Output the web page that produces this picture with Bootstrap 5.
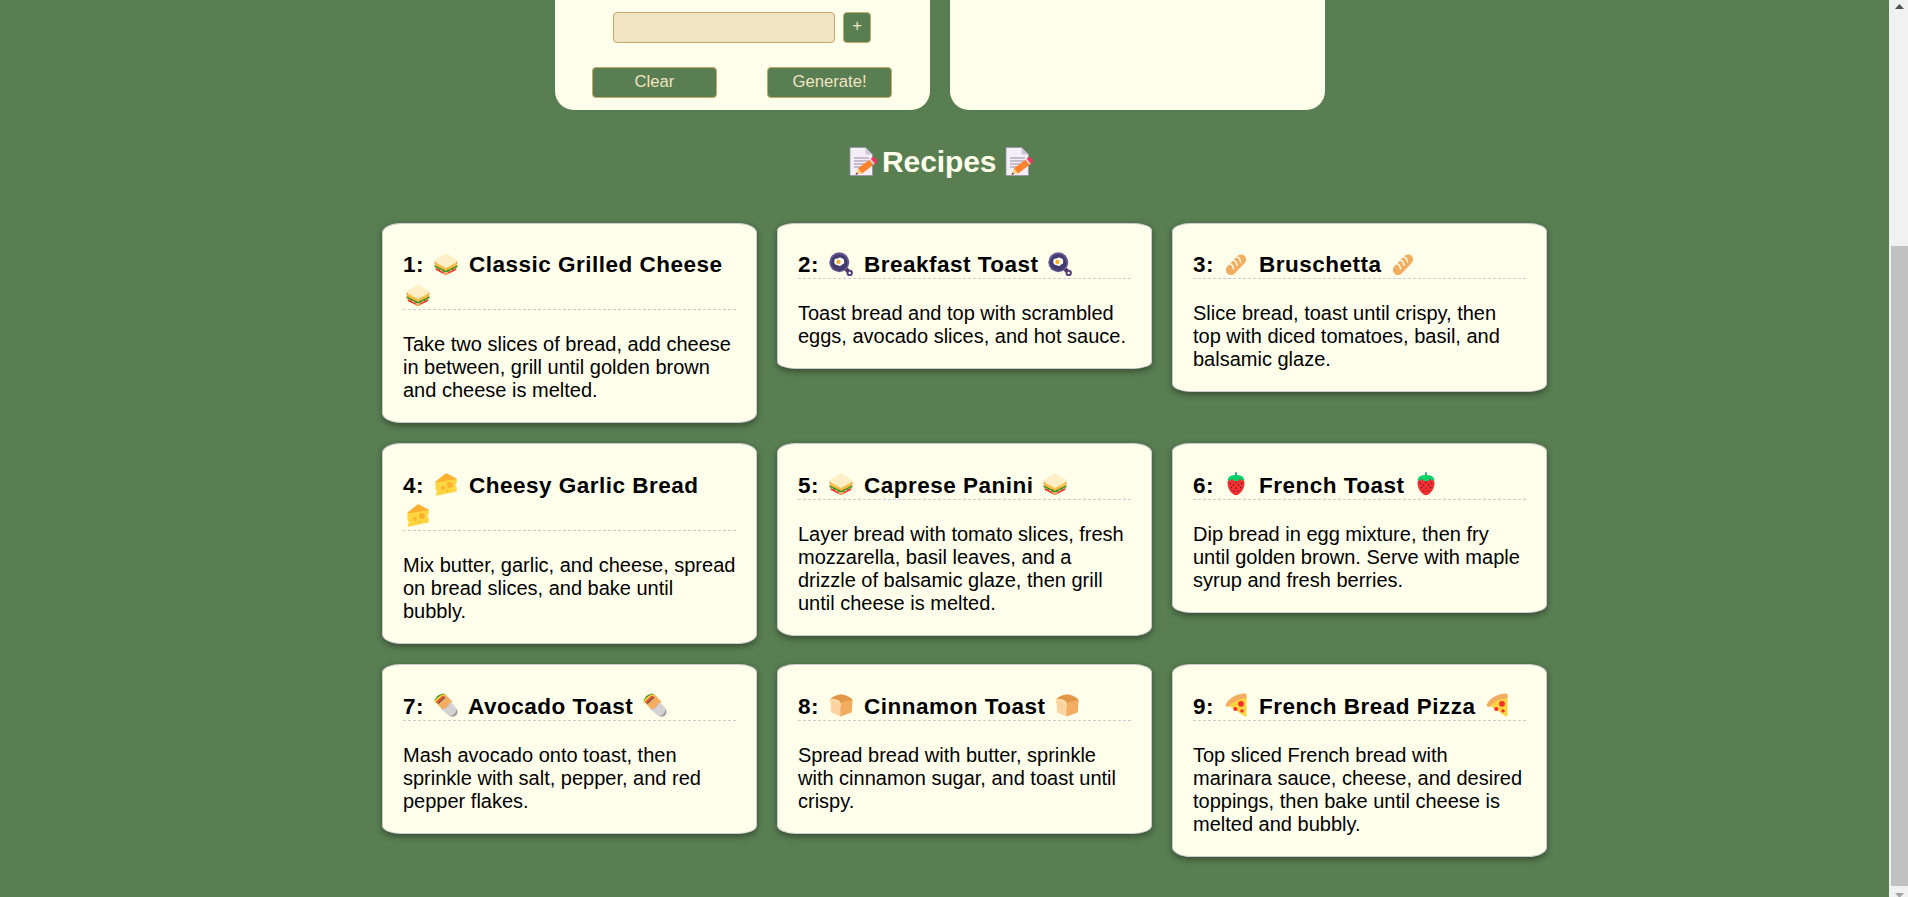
<!DOCTYPE html>
<html lang="en">
<head>
<meta charset="utf-8">
<meta name="viewport" content="width=device-width, initial-scale=1">
<title>Recipes</title>
<link href="https://cdn.jsdelivr.net/npm/bootstrap@5.3.0/dist/css/bootstrap.min.css" rel="stylesheet">
<style>
  :root { --green:#597e52; --gold:#c6a969; --cream:#ffffec; --sand:#f1e4c3; }
  html, body { height:100%; overflow:hidden; }
  body { background:var(--green); color:#000; font:20px/23px "Liberation Sans", Arial, sans-serif; }
  .panels { gap:20px; margin-left:555px; height:110px; }
  .panel { width:375px; background:var(--cream); border-radius:0 0 19px 19px; }
  .form-rows { padding:12px 37px 12px; }
  .form-rows .form-control { width:222px; height:31px; background:var(--sand); border:1px solid var(--gold); border-radius:4px; }
  .tool-btn { height:31px; padding:0 0 2px; font-size:16.67px; line-height:27px; color:var(--sand); background:var(--green); border:1px solid var(--gold); border-radius:4px; }
  .tool-btn.plus { width:28px; padding-bottom:4px; line-height:24px; }
  .tool-btn.wide { width:125px; }
  .entry-row { gap:8px; padding-left:21px; }
  .action-row { margin-top:24px; gap:50px; }
  .title { margin:34px 0 0 847px; font-size:30px; font-weight:700; line-height:36px; color:var(--cream); height:78.6px; }
  .title svg { width:31px; height:31px; margin-top:1.5px; }
  .title span { margin:0 7px 0 4px; letter-spacing:-.1px; }
  .recipes { display:grid; grid-template-columns:repeat(3,375px); gap:20px; margin-left:382px; align-items:start; }
  .recipe { background:var(--cream); border:1px solid #ccc; border-radius:5%; padding:23.5px 20px 20.25px; box-shadow:0 2.5px 6px rgba(0,0,0,.36); }
  .recipe h3 { font-size:22.5px; font-weight:700; line-height:27px; letter-spacing:.5px; margin:0 0 23px; border-bottom:1px dashed #ccc; }
  .recipe h3 svg { width:24px; height:24px; margin:4.5px 4.2px 0 3.2px; vertical-align:-3.5px; }
  .recipe p { margin:0; }
  .scroll { width:19px; height:897px; background:#f1f1f1; }
  .thumb { width:17px; height:640px; margin-top:236px; background:#c1c1c1; }
</style>
</head>
<body>
<svg width="0" height="0" class="position-absolute">
  <symbol id="note" viewBox="0 0 31 31">
    <path d="M3 1.500h15.500l7 7v21H3z" fill="#f3eef8" stroke="#998ea5" stroke-width=".8"/>
    <path d="M18.500 1.500v7h7z" fill="#cdc4d6"/>
    <path d="M7 12h15M7 15h14M7 18h11M7 21h8" stroke="#998ea5" stroke-width="1.200"/>
    <path d="M9 28.500l2.200-6.500 4.300 5z" fill="#ffce7c"/><path d="M8.500 29l1-2.500 1.500 1.500z" fill="#402a32"/>
    <path d="M11 22.300 22.500 13.700l4 5-11.300 8.800z" fill="#ff822d"/>
    <path d="M22.500 13.700l1.800-1.300 4 5-1.800 1.300z" fill="#d3d3d3"/>
    <path d="M24.800 12.600c2.500-2 5.800 2.300 3.600 4.500z" fill="#f8315f" stroke="#f8315f" stroke-width="1.500"/>
  </symbol>
  <symbol id="sandwich" viewBox="0 0 24 24">
    <path d="M1 16.200 12 22.500 23 16.200v1L12 23.200 1 17.500z" fill="#f3ad61"/>
    <path d="M2 16 12 21.500 22 16v2L12 23 2 18z" fill="#f92f2f"/>
    <path d="M8.500 20.800h7L12 23.200z" fill="#f3ad61"/>
    <path d="M.5 13 12 18.500 23.500 13v2.300l-3 1-1.500 1.700-2-.2-2 2-3 .7-3-.8-2-1.900-2 .2-1.500-1.700-3-1z" fill="#44911b"/>
    <path d="M1 12 12 17.800 23 12v1.500l-11 5.300L1 13.500z" fill="#ffb02e"/>
    <path d="M.6 8.500 12 15.700 23.400 8.500v3.300L12 18 .6 11.800z" fill="#e19747"/>
    <path d="M2 10.500 12 16.500 22 10.500v1.500L12 17.500 2 12z" fill="#fcd53f"/>
    <path d="M12 1.200 23.500 8.300v1.500L12 16 .5 9.800V8.300z" fill="#ffefc6"/>
  </symbol>
  <symbol id="pan" viewBox="0 0 24 24">
    <path d="M17 17l3 3" stroke="#533566" stroke-width="4"/>
    <circle cx="10.300" cy="10.300" r="10" fill="#635994"/><circle cx="10.300" cy="10.600" r="8.300" fill="#433b6b"/>
    <circle cx="20.700" cy="21" r="2.200" fill="#fff" stroke="#533e78" stroke-width="2"/>
    <path d="M5.300 9c0-2.500 2.200-2.500 3.500-2.500C10 5 12 5 13 6.500c2.500-.2 2 2.500 2.200 3.500.3 2-2 2-3 3.500-1.500 1-3-.2-4-.5-2 .1-3.500-2-2.900-4z" fill="#fff"/>
    <circle cx="9.500" cy="10" r="2.200" fill="#ffb02e"/>
  </symbol>
  <symbol id="baguette" viewBox="0 0 24 24">
    <path d="M7 18 17 7.500" stroke="#f3ad61" stroke-width="10.200" stroke-linecap="round"/>
    <path d="M5.500 11.700c2.500.2 3.500 2 4 5M9 8.300c2.500.2 3.500 2 4 5M12.500 5c2.500.2 3.500 2 4 5" fill="none" stroke="#ffffec" stroke-width="1.500" stroke-linecap="round"/>
  </symbol>
  <symbol id="cheese" viewBox="0 0 24 24">
    <path d="M1.500 9.500 11 2q1-1 2-.5L22.500 6.500v2L2 12z" fill="#ffb02e"/>
    <path d="M1.500 10.500 22.700 7v4.300a2 2 0 0 0 0 3.800v4.500L2 23.800v-2.600a2 2 0 0 0-.5-3.500z" fill="#fcd53f"/>
    <circle cx="15.800" cy="12.900" r="3" fill="#ffb02e"/><circle cx="9" cy="16" r="1.900" fill="#ffb02e"/><circle cx="13.300" cy="18.800" r="1" fill="#ffb02e"/>
  </symbol>
  <symbol id="berry" viewBox="0 0 24 24">
    <path d="M3.500 11c0-8 17-8 17 0 0 6-4.500 12-8.500 12.300C8 23 3.500 17 3.500 11z" fill="#f92f2f"/>
    <path d="M12 .2v6" stroke="#008463" stroke-width="1.500"/>
    <path d="M3.500 8.500C4.500 3.500 8 3 12 3s7.500.5 8.500 5.500q-2.700.5-4.500-1.800Q14 9.500 12 9.200 10 9.500 8 6.700q-1.500 2.300-4.500 1.800z" fill="#00d26a"/>
    <path d="M6.300 10.500v1.300M17.700 10.500v1.300M9.500 12.500v1.300M14.500 12.500v1.300M7.500 15v1.300M12 15.500v1.300M16.500 15v1.300M9.800 18.500v1.300M14.200 18.500v1.300M12 10v1" stroke="#321b41" stroke-width="1.200"/>
  </symbol>
  <symbol id="burrito" viewBox="0 0 24 24">
    <path d="M16.500 10.500 22 15.500q3 3.500 0 7-2.500 2-6 .5L7 15z" fill="#9b9b9b"/>
    <path d="M1 8C-.5 6 3 5.500 3 3c2-.2 1.500-2 4-1.500 2-1.500 3-1.500 4 0L3 9.500z" fill="#44911b"/>
    <path d="M1.200 9C4 7 8 2.500 11.500 1.200L18.500 9l-9.500 8z" fill="#f3ad61"/>
    <path d="M1 9.500Q4.500 3.500 11 2" fill="none" stroke="#fcd53f" stroke-width="2"/>
    <path d="M2.500 9.500 9.500 3" stroke="#f92f2f" stroke-width="1.300"/><path d="M4 10.500 11 4" stroke="#6d4534" stroke-width="1.200"/>
    <path d="M6.500 15.700C9 17 12 15.500 14 13q2-2.800 3-4l5.500 6.500q0 3.500-2.500 6-2.500 2-5 1z" fill="#d3d3d3"/>
  </symbol>
  <symbol id="bread" viewBox="0 0 24 24">
    <path d="M1 7c0-3 9-5.800 11-5.800S24 4 23.500 8l-1 11L11 23.500 9 10z" fill="#e19747"/>
    <path d="M11.500 12q0-3 4-3.500 3-1 7.500-1l-.5 12L11.500 23.500z" fill="#f3ad61"/>
    <path d="M1.500 10.500C-.5 7 1 5 3.500 6c4 0 8 1 8.500 5 .5 1.500-.5 2-.5 3v9.500L2 19.500z" fill="#ffd9a8"/>
    <path d="M4 9.500v10M6.500 10.500v10M9 11.500v10" stroke="#f3ad61" stroke-width=".9" stroke-dasharray=".9 1.500"/>
  </symbol>
  <symbol id="pizza" viewBox="0 0 24 24">
    <path d="M4 12 19.500 3.500h3V22.500q0 1.500-2 .8z" fill="#fcd53f"/>
    <path d="M1.300 13C3.500 5.500 12.500 1 21 .6q1.700 0 1.700 1.700v2.600C15 5.500 7.500 9.500 4.500 14z" fill="#f3ad61"/>
    <circle cx="17" cy="10.800" r="2.900" fill="#f92f2f"/><circle cx="11.300" cy="16" r="2.100" fill="#f92f2f"/><circle cx="18" cy="17.900" r="1.700" fill="#f92f2f"/>
  </symbol>
</svg>
<div class="d-flex">
  <main class="flex-grow-1">
    <div class="panels d-flex">
      <section class="panel form-rows">
        <div class="entry-row d-flex">
          <input class="form-control" type="text" aria-label="Ingredient">
          <button class="btn tool-btn plus" type="button">+</button>
        </div>
        <div class="action-row d-flex">
          <button class="btn tool-btn wide" type="button">Clear</button>
          <button class="btn tool-btn wide" type="button">Generate!</button>
        </div>
      </section>
      <section class="panel"></section>
    </div>
    <h2 class="title d-flex"><svg><use href="#note"/></svg><span>Recipes</span><svg><use href="#note"/></svg></h2>
    <div class="recipes">
      <article class="recipe"><h3>1: <svg><use href="#sandwich"/></svg> Classic Grilled Cheese <svg><use href="#sandwich"/></svg></h3><p>Take two slices of bread, add cheese in between, grill until golden brown and cheese is melted.</p></article>
      <article class="recipe"><h3>2: <svg><use href="#pan"/></svg> Breakfast Toast <svg><use href="#pan"/></svg></h3><p>Toast bread and top with scrambled eggs, avocado slices, and hot sauce.</p></article>
      <article class="recipe"><h3>3: <svg><use href="#baguette"/></svg> Bruschetta <svg><use href="#baguette"/></svg></h3><p>Slice bread, toast until crispy, then top with diced tomatoes, basil, and balsamic glaze.</p></article>
      <article class="recipe"><h3>4: <svg><use href="#cheese"/></svg> Cheesy Garlic Bread <svg><use href="#cheese"/></svg></h3><p>Mix butter, garlic, and cheese, spread on bread slices, and bake until bubbly.</p></article>
      <article class="recipe"><h3>5: <svg><use href="#sandwich"/></svg> Caprese Panini <svg><use href="#sandwich"/></svg></h3><p>Layer bread with tomato slices, fresh mozzarella, basil leaves, and a drizzle of balsamic glaze, then grill until cheese is melted.</p></article>
      <article class="recipe"><h3>6: <svg><use href="#berry"/></svg> French Toast <svg><use href="#berry"/></svg></h3><p>Dip bread in egg mixture, then fry until golden brown. Serve with maple syrup and fresh berries.</p></article>
      <article class="recipe"><h3>7: <svg><use href="#burrito"/></svg> Avocado Toast <svg><use href="#burrito"/></svg></h3><p>Mash avocado onto toast, then sprinkle with salt, pepper, and red pepper flakes.</p></article>
      <article class="recipe"><h3>8: <svg><use href="#bread"/></svg> Cinnamon Toast <svg><use href="#bread"/></svg></h3><p>Spread bread with butter, sprinkle with cinnamon sugar, and toast until crispy.</p></article>
      <article class="recipe"><h3>9: <svg><use href="#pizza"/></svg> French Bread Pizza <svg><use href="#pizza"/></svg></h3><p>Top sliced French bread with marinara sauce, cheese, and desired toppings, then bake until cheese is melted and bubbly.</p></article>
    </div>
  </main>
  <div class="scroll d-flex flex-column align-items-end flex-shrink-0">
    <svg width="17" height="10"><path d="M4 9 8.500 4 13 9z" fill="#505050"/></svg>
    <div class="thumb"></div>
    <svg width="17" height="11"><path d="M4 7h9L8.500 12z" fill="#a3a3a3"/></svg>
  </div>
</div>
<script src="https://cdn.jsdelivr.net/npm/bootstrap@5.3.0/dist/js/bootstrap.bundle.min.js"></script>
</body>
</html>
